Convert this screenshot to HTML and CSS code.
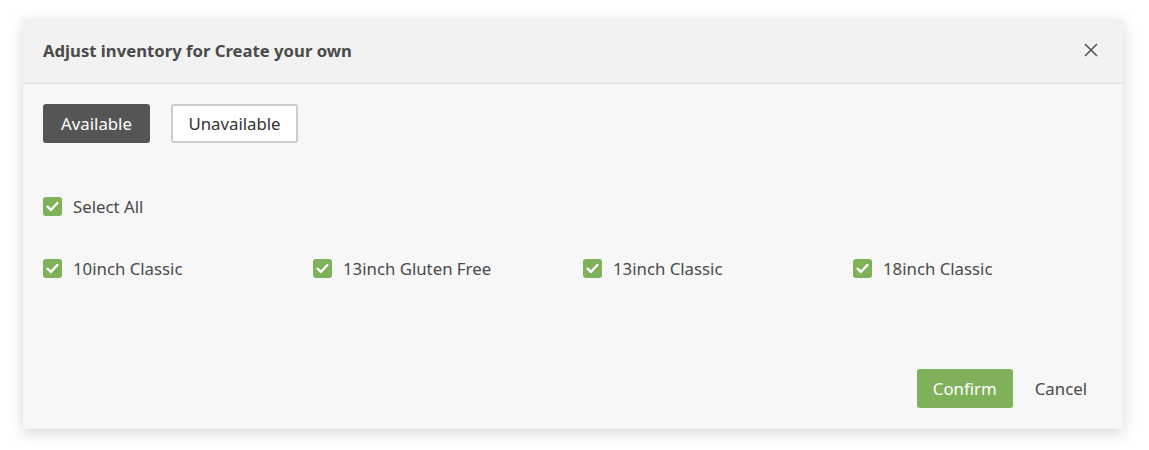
FILE: index.html
```html
<!DOCTYPE html>
<html>
<head>
<meta charset="utf-8">
<link rel="stylesheet" href="styles.css">
</head>
<body>
<div class="modal">
  <div class="modal-header">
    <h2 class="title">Adjust inventory for Create your own</h2>
    <button class="close" aria-label="Close">
      <svg width="14" height="14" viewBox="0 0 14 14"><path d="M1 1L13 13M13 1L1 13" stroke="#555" stroke-width="1.6" fill="none"/></svg>
    </button>
  </div>
  <div class="modal-body">
    <div class="toggle">
      <button class="btn btn-dark">Available</button>
      <button class="btn btn-outline">Unavailable</button>
    </div>
    <label class="check select-all"><span class="box"><svg width="13" height="11" viewBox="0 0 12 10"><path d="M1.5 5.2L4.5 8.2L10.5 1.8" stroke="#fff" stroke-width="2.2" fill="none" stroke-linecap="round" stroke-linejoin="round"/></svg></span>Select All</label>
    <div class="grid">
      <label class="check"><span class="box"><svg width="13" height="11" viewBox="0 0 12 10"><path d="M1.5 5.2L4.5 8.2L10.5 1.8" stroke="#fff" stroke-width="2.2" fill="none" stroke-linecap="round" stroke-linejoin="round"/></svg></span>10inch Classic</label>
      <label class="check"><span class="box"><svg width="13" height="11" viewBox="0 0 12 10"><path d="M1.5 5.2L4.5 8.2L10.5 1.8" stroke="#fff" stroke-width="2.2" fill="none" stroke-linecap="round" stroke-linejoin="round"/></svg></span>13inch Gluten Free</label>
      <label class="check"><span class="box"><svg width="13" height="11" viewBox="0 0 12 10"><path d="M1.5 5.2L4.5 8.2L10.5 1.8" stroke="#fff" stroke-width="2.2" fill="none" stroke-linecap="round" stroke-linejoin="round"/></svg></span>13inch Classic</label>
      <label class="check"><span class="box"><svg width="13" height="11" viewBox="0 0 12 10"><path d="M1.5 5.2L4.5 8.2L10.5 1.8" stroke="#fff" stroke-width="2.2" fill="none" stroke-linecap="round" stroke-linejoin="round"/></svg></span>18inch Classic</label>
    </div>
    <div class="footer">
      <button class="btn btn-green">Confirm</button>
      <button class="btn btn-link">Cancel</button>
    </div>
  </div>
</div>
</body>
</html>
```
FILE: styles.css
```css
* { box-sizing: border-box; }
html, body { margin: 0; background: #fff; }
body {
  padding: 19px 26px 21px 23px;
  font-family: "Noto Sans", "Open Sans", sans-serif;
  color: #4a4a4a;
}
.modal {
  width: 1100px;
  height: 410px;
  background: #f7f7f7;
  box-shadow: 0 4px 14px rgba(0,0,0,0.16);
  display: flex;
  flex-direction: column;
}
.modal-header {
  height: 65px;
  background: #f2f2f2;
  border-bottom: 1px solid #dcdcdc;
  display: flex;
  align-items: center;
  justify-content: space-between;
  padding: 0 25px 2px 20px;
}
.title {
  margin: 0;
  font-size: 16.7px;
  font-weight: 700;
  color: #4a4a4a;
}
.close {
  background: none;
  border: 0;
  padding: 0;
  width: 14px;
  height: 14px;
  display: flex;
  cursor: pointer;
}
.modal-body {
  flex: 1;
  padding: 20px 20px 21px 20px;
  display: flex;
  flex-direction: column;
}
.toggle { display: flex; gap: 21px; }
.btn {
  font-family: inherit;
  font-size: 16.8px;
  height: 39px;
  border-radius: 3px;
  cursor: pointer;
  padding: 0 14px;
}
.btn-dark {
  background: #555;
  color: #fff;
  border: 0;
  width: 107px;
}
.btn-outline {
  background: #fff;
  color: #333;
  border: 2px solid #ccc;
  width: 127px;
}
.check {
  display: flex;
  align-items: center;
  gap: 11px;
  font-size: 16.8px;
  color: #4a4a4a;
  height: 20px;
}
.box {
  width: 19px;
  height: 19px;
  border-radius: 3px;
  background: #7eb15a;
  display: flex;
  align-items: center;
  justify-content: center;
  flex: none;
}
.select-all { margin-top: 53px; }
.grid {
  margin-top: 42px;
  display: grid;
  grid-template-columns: repeat(4, 270px);
}
.footer {
  margin-top: auto;
  display: flex;
  justify-content: flex-end;
  align-items: center;
  gap: 8px;
}
.btn-green {
  background: #7eb15a;
  color: #fff;
  border: 0;
  width: 96px;
}
.btn-link {
  background: none;
  border: 0;
  color: #4a4a4a;
  padding-right: 16px;
}
```
